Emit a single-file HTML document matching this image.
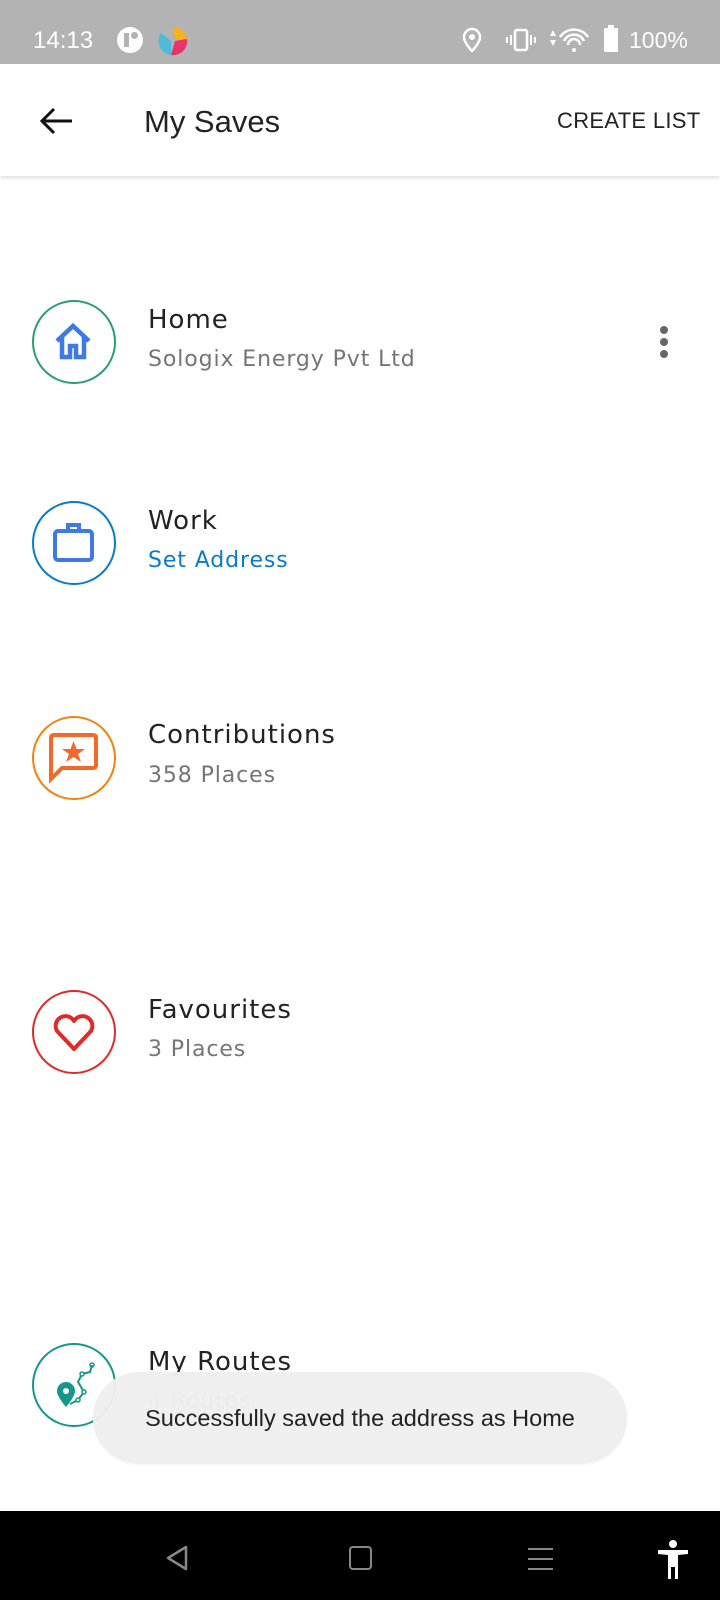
<!DOCTYPE html>
<html><head><meta charset="utf-8"><style>
*{margin:0;padding:0;box-sizing:border-box}
body{width:720px;height:1600px;position:relative;background:#fff;overflow:hidden;font-family:"Liberation Sans",sans-serif}
.sb{position:absolute;left:0;top:0;width:720px;height:64px;background:#b3b3b3;color:#fff;font-size:22px}
.hd{position:absolute;left:0;top:64px;width:720px;height:112px;background:#fff;box-shadow:0 2px 3px rgba(0,0,0,.12)}
.circ{position:absolute;left:32px;width:84px;height:84px;border-radius:50%;border:2px solid}
.t{position:absolute;left:148px;font-family:"DejaVu Sans",sans-serif;font-size:26px;letter-spacing:1px;color:#222}
.s{position:absolute;left:148px;font-family:"DejaVu Sans",sans-serif;font-size:22px;letter-spacing:0.9px;color:#757575}
.nav{position:absolute;left:0;top:1511px;width:720px;height:89px;background:#000}
</style></head><body>
<div class="sb">
<div style="position:absolute;left:33px;top:27px;font-size:24px">14:13</div>
<div style="position:absolute;left:117px;top:27px;width:26px;height:26px;border-radius:50%;background:#fff"></div>
<div style="position:absolute;left:124px;top:33px;width:5px;height:14px;background:#b3b3b3"></div>
<div style="position:absolute;left:131px;top:32px;width:7px;height:7px;border-radius:50%;background:#b3b3b3"></div>
<svg style="position:absolute;left:157px;top:25px" width="32" height="32" viewBox="0 0 32 32"><path d="M16 2 A14 14 0 0 1 30 14 L18 14Z" fill="#f7b21b"/><path d="M30 14 A14 14 0 0 1 14 30 L18 16Z" fill="#e8336b"/><path d="M14 30 A14 14 0 0 1 4 8 L14 16Z" fill="#4ebbd8"/></svg>
<svg style="position:absolute;left:462px;top:27px" width="20" height="26" viewBox="0 0 20 26"><path d="M10 2a8 8 0 0 0-8 8c0 6 8 14 8 14s8-8 8-14a8 8 0 0 0-8-8z" fill="none" stroke="#fff" stroke-width="2.5"/><circle cx="10" cy="10" r="3" fill="#fff"/></svg>
<svg style="position:absolute;left:506px;top:28px" width="30" height="24" viewBox="0 0 30 24"><rect x="9" y="2" width="12" height="20" rx="2" fill="none" stroke="#fff" stroke-width="2.5"/><rect x="4" y="7" width="2" height="10" fill="#fff"/><rect x="24" y="7" width="2" height="10" fill="#fff"/><rect x="0" y="9" width="2" height="6" fill="#fff"/><rect x="28" y="9" width="2" height="6" fill="#fff"/></svg>
<svg style="position:absolute;left:548px;top:27px" width="44" height="26" viewBox="0 0 44 26"><path d="M2 9 L5 3 L8 9Z M2 13 L5 19 L8 13Z" fill="#fff"/><path d="M12 10 A17 17 0 0 1 40 10 M16 14 A11 11 0 0 1 36 14 M20 18 A6 6 0 0 1 32 18" fill="none" stroke="#fff" stroke-width="2.5"/><circle cx="26" cy="23" r="2" fill="#fff"/></svg>
<div style="position:absolute;left:604px;top:28px;width:14px;height:24px;background:#fff;border-radius:1px"></div>
<div style="position:absolute;left:608px;top:25px;width:6px;height:4px;background:#fff"></div>
<div style="position:absolute;left:629px;top:27px;font-size:23px">100%</div>
</div>
<div class="hd">
<svg style="position:absolute;left:38px;top:42px" width="36" height="30" viewBox="0 0 36 30"><path d="M34 15 H4 M16 3 L4 15 L16 27" fill="none" stroke="#111" stroke-width="3"/></svg>
<div style="position:absolute;left:144px;top:40px;font-size:31px;color:#222">My Saves</div>
<div style="position:absolute;left:557px;top:44px;font-size:22px;color:#222;font-weight:500;letter-spacing:0.3px">CREATE LIST</div>
</div>

<div class="circ" style="top:300px;border-color:#2a9d78"></div>
<svg style="position:absolute;left:52px;top:322px" width="42" height="40" viewBox="0 0 42 40"><path d="M5 19 L21 4 L37 19 M10 15 V35 H18 V24 H24 V35 H32 V15" fill="none" stroke="#3d7ae6" stroke-width="4.5" stroke-linejoin="miter"/></svg>
<div class="t" style="top:305px">Home</div>
<div class="s" style="top:347px">Sologix Energy Pvt Ltd</div>
<div style="position:absolute;left:660px;top:326px;width:8px;height:8px;border-radius:50%;background:#666;box-shadow:0 12px 0 #666,0 24px 0 #666"></div>

<div class="circ" style="top:501px;border-color:#0a7bc8"></div>
<svg style="position:absolute;left:52px;top:520px" width="44" height="44" viewBox="0 0 44 44"><rect x="3" y="11" width="37" height="29" rx="3" fill="none" stroke="#3d7ae6" stroke-width="4"/><path d="M16 11 V5 H27 V11" fill="none" stroke="#3d7ae6" stroke-width="4"/></svg>
<div class="t" style="top:506px">Work</div>
<div class="s" style="top:548px;color:#0a7bc8">Set Address</div>

<div class="circ" style="top:716px;border-color:#f5820e"></div>
<svg style="position:absolute;left:48px;top:732px" width="52" height="52" viewBox="0 0 52 52"><path d="M3 6 Q3 3 6 3 H45 Q48 3 48 6 V33 Q48 36 45 36 H14 L3 47Z" fill="none" stroke="#f26a2a" stroke-width="4"/><path d="M25.5 9 L28.5 17 L37 17 L30 22 L33 30 L25.5 25 L18 30 L21 22 L14 17 L22.5 17Z" fill="#f26a2a"/></svg>
<div class="t" style="top:720px">Contributions</div>
<div class="s" style="top:763px">358 Places</div>

<div class="circ" style="top:990px;border-color:#e02a2a"></div>
<svg style="position:absolute;left:52px;top:1013px" width="44" height="40" viewBox="0 0 44 40"><path d="M22 36 L5 18 A9 9 0 0 1 22 8 A9 9 0 0 1 39 18Z" fill="none" stroke="#e02a2a" stroke-width="4" stroke-linejoin="round"/></svg>
<div class="t" style="top:995px">Favourites</div>
<div class="s" style="top:1037px">3 Places</div>

<div class="circ" style="top:1343px;border-color:#17978b"></div>
<svg style="position:absolute;left:52px;top:1362px" width="46" height="48" viewBox="0 0 46 48"><path d="M14 20 a9 9 0 0 0-9 9c0 6 9 16 9 16s9-10 9-16a9 9 0 0 0-9-9z" fill="#17978b"/><circle cx="14" cy="29" r="3" fill="#fff"/><path d="M40 3 L38 10 L30 12 L26 20 L32 30 L26 38 L18 42" fill="none" stroke="#17978b" stroke-width="2"/><circle cx="40" cy="3" r="2" fill="none" stroke="#17978b" stroke-width="1.5"/><circle cx="30" cy="12" r="2" fill="#fff" stroke="#17978b" stroke-width="1.5"/><circle cx="32" cy="30" r="2" fill="#fff" stroke="#17978b" stroke-width="1.5"/><circle cx="26" cy="38" r="2" fill="#fff" stroke="#17978b" stroke-width="1.5"/></svg>
<div class="t" style="top:1347px">My Routes</div>
<div class="s" style="top:1389px">4 Routes</div>

<div style="position:absolute;left:93px;top:1372px;width:534px;height:92px;border-radius:46px;background:rgba(238,238,238,.97);box-shadow:0 1px 2px rgba(0,0,0,.05)"></div>
<div style="position:absolute;left:93px;top:1405px;width:534px;text-align:center;font-size:23.5px;color:#222">Successfully saved the address as Home</div>

<div class="nav">
<svg style="position:absolute;left:164px;top:33px" width="26" height="28" viewBox="0 0 26 28"><path d="M22 3 L4 14 L22 25Z" fill="none" stroke="#888" stroke-width="2.5" stroke-linejoin="round"/></svg>
<div style="position:absolute;left:349px;top:35px;width:23px;height:24px;border:2.5px solid #888;border-radius:4px"></div>
<div style="position:absolute;left:528px;top:37px;width:25px;height:2px;background:#888;box-shadow:0 10px 0 #888,0 20px 0 #888"></div>
<svg style="position:absolute;left:656px;top:29px" width="34" height="40" viewBox="0 0 34 40"><circle cx="17" cy="4" r="4" fill="#fff"/><path d="M2 10 H32 V14 L22 15 V39 H19 V27 H15 V39 H12 V15 L2 14Z" fill="#fff"/></svg>
</div>
</body></html>
